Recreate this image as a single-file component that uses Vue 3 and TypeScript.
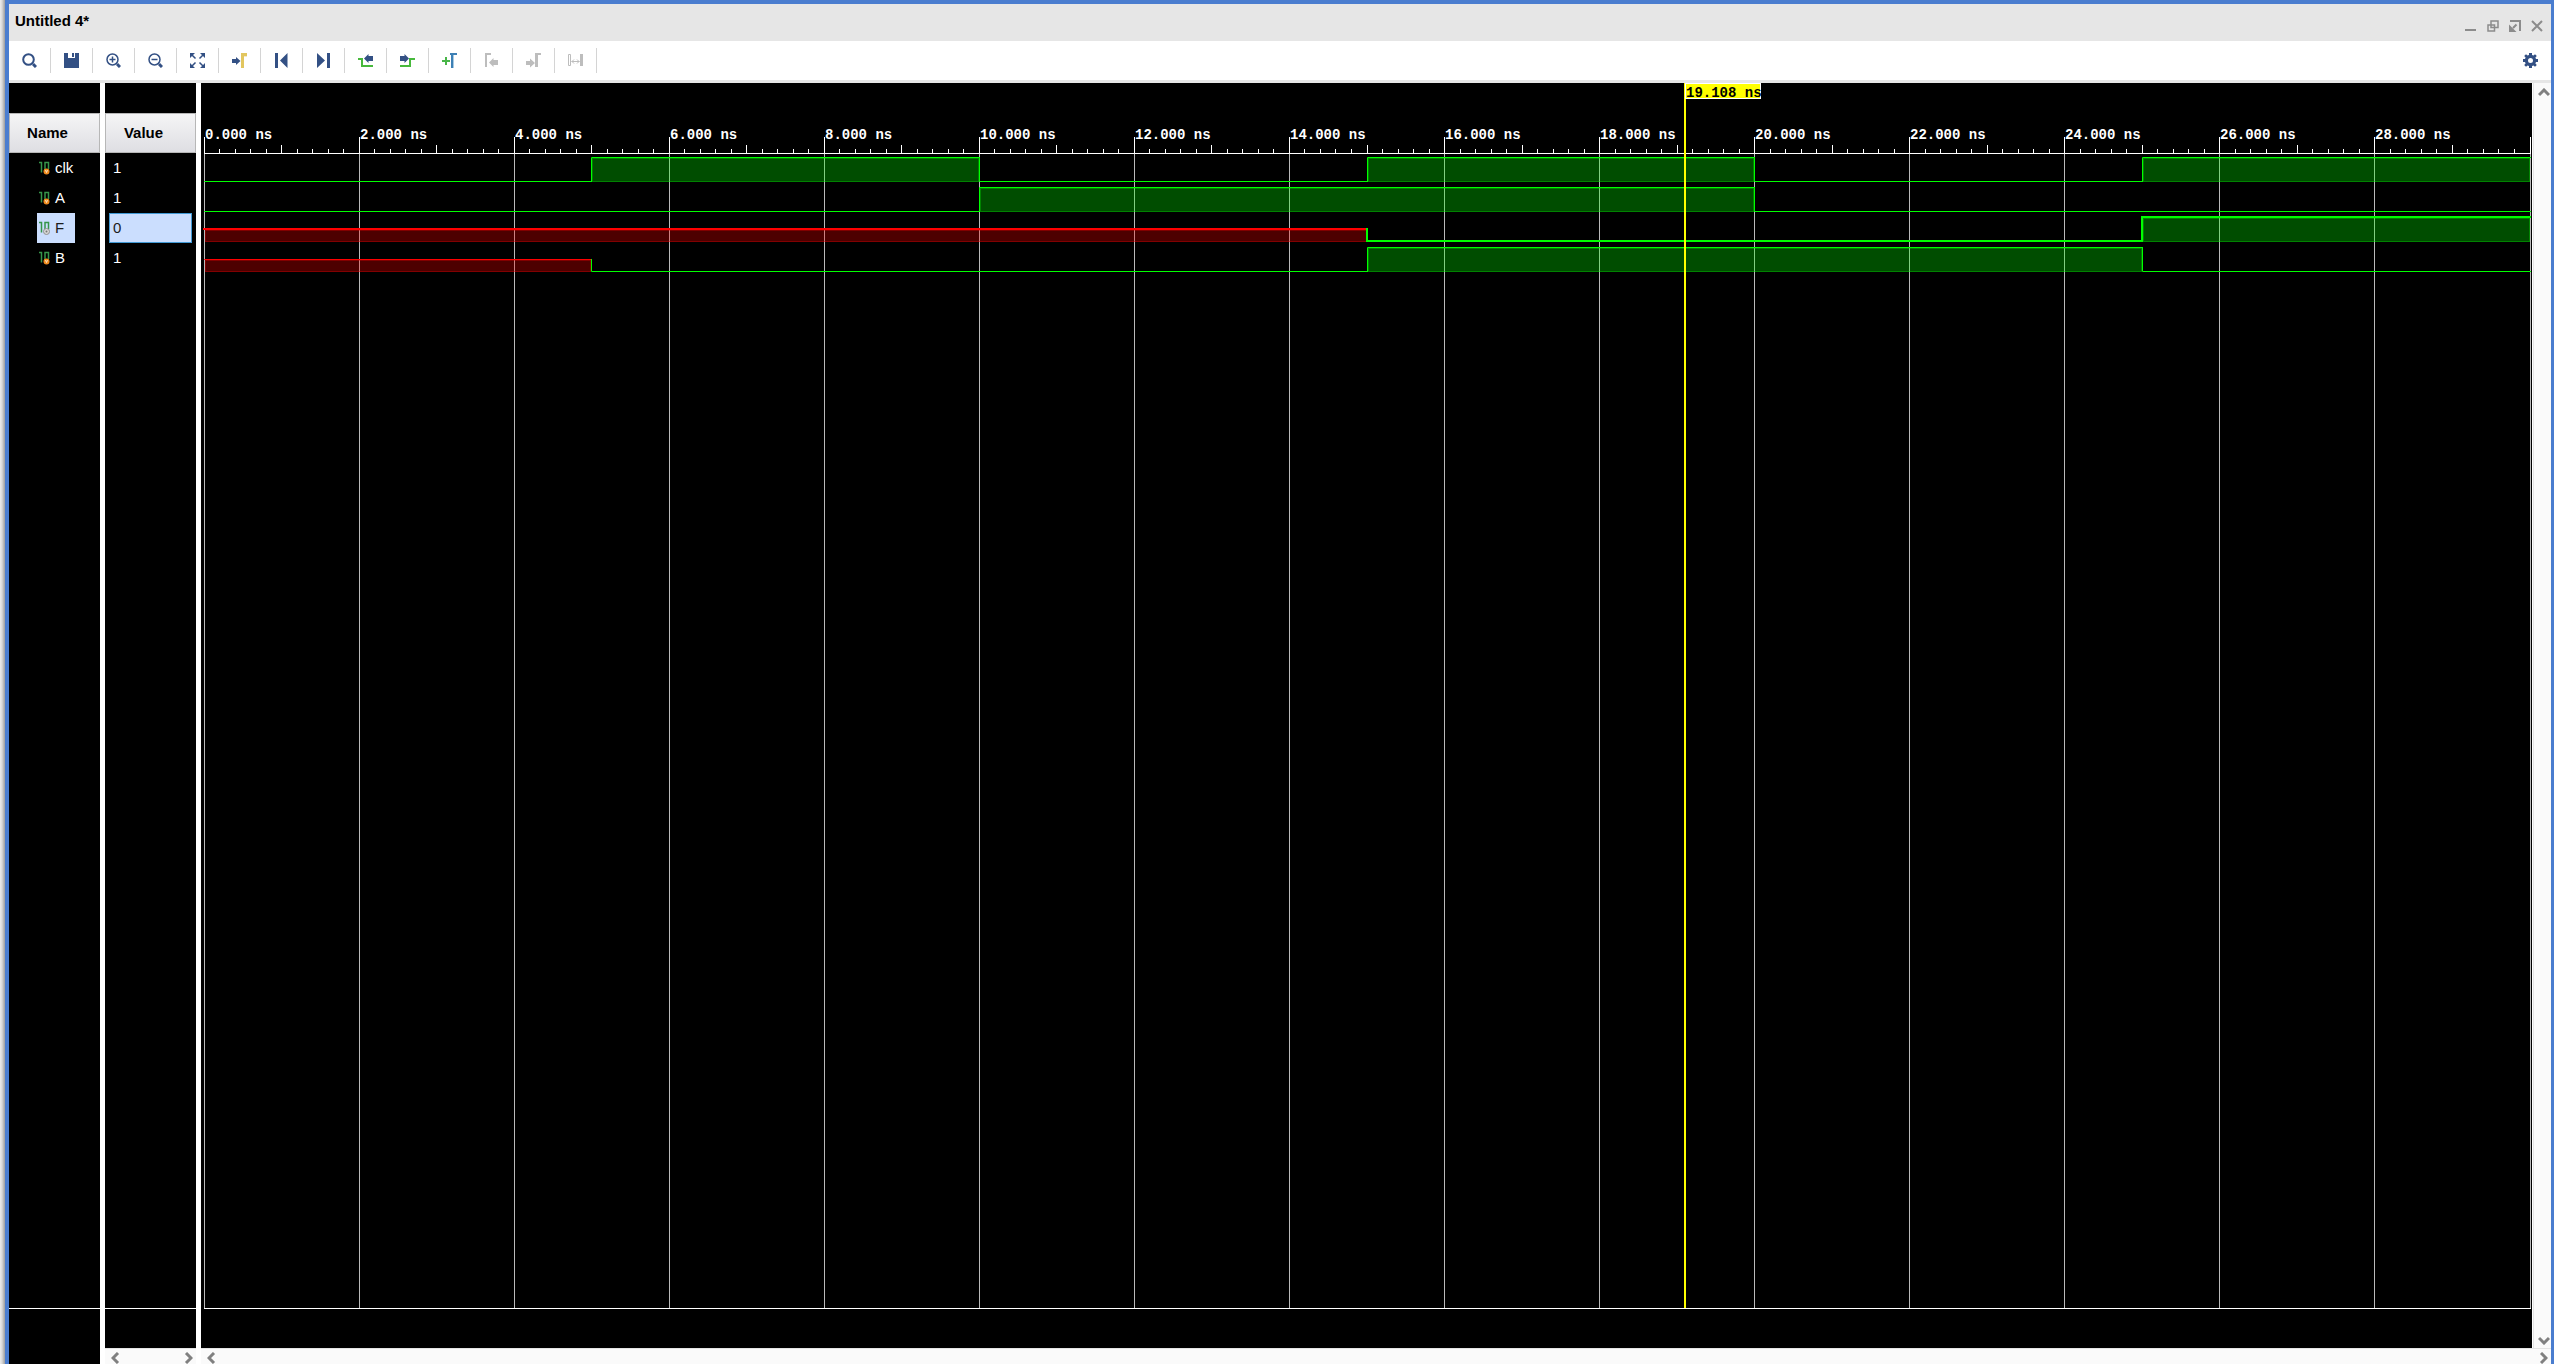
<script setup lang="ts">
import { computed, onBeforeUnmount, onMounted, ref } from 'vue'

type Level = '0' | '1' | 'X'
interface Segment { from: number; to: number; level: Level }
interface Signal { name: string; value: string; output: boolean; segments: Segment[] }

const signals: Signal[] = [
  {
    name: 'clk', value: '1', output: false,
    segments: [
      { from: 0, to: 5, level: '0' }, { from: 5, to: 10, level: '1' },
      { from: 10, to: 15, level: '0' }, { from: 15, to: 20, level: '1' },
      { from: 20, to: 25, level: '0' }, { from: 25, to: 30, level: '1' },
    ],
  },
  {
    name: 'A', value: '1', output: false,
    segments: [
      { from: 0, to: 10, level: '0' }, { from: 10, to: 20, level: '1' }, { from: 20, to: 30, level: '0' },
    ],
  },
  {
    name: 'F', value: '0', output: true,
    segments: [
      { from: 0, to: 15, level: 'X' }, { from: 15, to: 25, level: '0' }, { from: 25, to: 30, level: '1' },
    ],
  },
  {
    name: 'B', value: '1', output: false,
    segments: [
      { from: 0, to: 5, level: 'X' }, { from: 5, to: 15, level: '0' },
      { from: 15, to: 25, level: '1' }, { from: 25, to: 30, level: '0' },
    ],
  },
]

const selected = ref('F')
const cursorTime = 19.108
const endTime = 30
const rulerY = 70
const rowHeight = 30
const levelY: Record<Level, number> = { '0': 28, '1': 4, X: 16 }

const plot = ref<HTMLElement | null>(null)
const width = ref(1200)
const height = ref(600)
let observer: ResizeObserver | undefined

function measure() {
  if (!plot.value) return
  width.value = plot.value.clientWidth
  height.value = plot.value.clientHeight
}
onMounted(() => {
  measure()
  observer = new ResizeObserver(measure)
  if (plot.value) observer.observe(plot.value)
})
onBeforeUnmount(() => observer?.disconnect())

const xAt = (t: number) => 3 + Math.floor((t * (width.value - 5)) / endTime + 0.001)
const floorY = computed(() => height.value - 40)

const ticks = computed(() =>
  Array.from({ length: endTime * 5 + 1 }, (_, i) => ({
    x: xAt(i / 5) + 0.5,
    size: i % 10 === 0 ? 16 : i % 5 === 0 ? 8 : 4,
  })),
)
const majors = computed(() =>
  Array.from({ length: endTime / 2 + 1 }, (_, i) => ({
    x: xAt(i * 2),
    label: i * 2 < endTime ? `${(i * 2).toFixed(3)} ns` : '',
  })),
)
const waves = computed(() =>
  signals.map((s, row) => {
    const active = s.name === selected.value
    const top = rulerY + row * rowHeight
    const half = active ? 0 : 0.5
    return {
      name: s.name,
      active,
      parts: s.segments.map((seg, i) => {
        const x0 = xAt(seg.from)
        const x1 = xAt(seg.to)
        const y = top + levelY[seg.level] + half
        const before = i ? top + levelY[s.segments[i - 1].level] + half : y
        return {
          unknown: seg.level === 'X',
          filled: seg.level !== '0',
          x: x0 + 1.5,
          y: top + levelY[seg.level] + 1.5,
          w: x1 - x0 - 2,
          h: 27 - levelY[seg.level],
          d: `M${x0 + half} ${before}V${y}H${x1 + half}`,
        }
      }),
    }
  }),
)
const cursorX = computed(() => xAt(cursorTime))

const tools = [
  { id: 'search', label: 'Search', disabled: false },
  { id: 'save', label: 'Save', disabled: false },
  { id: 'zoomin', label: 'Zoom in', disabled: false },
  { id: 'zoomout', label: 'Zoom out', disabled: false },
  { id: 'fit', label: 'Zoom fit', disabled: false },
  { id: 'cursor', label: 'Go to cursor', disabled: false },
  { id: 'first', label: 'Go to start', disabled: false },
  { id: 'last', label: 'Go to end', disabled: false },
  { id: 'prev', label: 'Previous transition', disabled: false },
  { id: 'next', label: 'Next transition', disabled: false },
  { id: 'add', label: 'Add marker', disabled: false },
  { id: 'prevmark', label: 'Previous marker', disabled: true },
  { id: 'nextmark', label: 'Next marker', disabled: true },
  { id: 'swap', label: 'Swap cursors', disabled: true },
]
</script>

<template>
  <div class="frame">
    <main class="window">
      <header class="title-bar">
        <h1>Untitled 4*</h1>
        <div class="window-controls">
          <button aria-label="Minimize"><svg width="12" height="12"><path d="M0 10H11" /></svg></button>
          <button aria-label="Restore"><svg width="12" height="12"><path class="fine" d="M4 1H11V7.500H4ZM1 5H7.500V11H1Z" /></svg></button>
          <button aria-label="Float"><svg width="12" height="12"><path d="M1 1H11V11M7.500 4.500L4 8" /><path class="solid" d="M0 4.500V12H7.500Z" /></svg></button>
          <button aria-label="Close"><svg width="12" height="12"><path d="M1 1L11 11M11 1L1 11" /></svg></button>
        </div>
      </header>

      <nav class="toolbar" aria-label="Waveform tools">
        <button v-for="t in tools" :key="t.id" class="tool" :aria-label="t.label" :disabled="t.disabled">
          <svg width="15" height="15" viewBox="0 0 15 15">
            <template v-if="t.id === 'search'">
              <circle class="line" cx="6.5" cy="6.5" r="5.3" />
              <path class="thick" d="M11 11L14 14" />
            </template>
            <template v-else-if="t.id === 'save'">
              <path class="blue" d="M0 0H4V5H11V0H15V15H0Z" />
              <path class="blue" d="M8 0H10V4H8Z" />
            </template>
            <template v-else-if="t.id === 'zoomin' || t.id === 'zoomout'">
              <circle class="line thin" cx="6.5" cy="6.5" r="5.5" />
              <path class="line thin" d="M3.5 6.5H9.5" />
              <path v-if="t.id === 'zoomin'" class="line thin" d="M6.5 3.5V9.5" />
              <path class="thick" d="M11 11L14 14" />
            </template>
            <template v-else-if="t.id === 'fit'">
              <path class="blue" d="M0 0H5L0 5ZM15 0V5L10 0ZM0 15V10L5 15ZM15 15H10L15 10Z" />
              <path class="line thin" d="M2 2L5.5 5.5M13 2L9.5 5.5M2 13L5.5 9.5M13 13L9.5 9.5" />
            </template>
            <template v-else-if="t.id === 'cursor'">
              <path class="blue" d="M0 6H4V4L8.5 8L4 12V10H0Z" />
              <path class="pale-yellow" d="M11 3H15V4H12V15H11Z" />
              <path class="yellow" d="M9 0H15V3H12V15H9Z" />
            </template>
            <path v-else-if="t.id === 'first'" class="blue" d="M1 0H4V15H1ZM13.500 0V15L6 7.5Z" />
            <path v-else-if="t.id === 'last'" class="blue" d="M11 0H14V15H11ZM1 0V15L9 7.5Z" />
            <template v-else-if="t.id === 'prev'">
              <path class="green-line" d="M0 6H4V13H15" />
              <path class="blue" d="M6 5.5L10.500 1V3H15V8H10.500V10Z" />
            </template>
            <template v-else-if="t.id === 'next'">
              <path class="green-line" d="M0 13H10V6H15" />
              <path class="blue" d="M9 5.500L4.500 1V3H0V8H4.500V10Z" />
            </template>
            <template v-else-if="t.id === 'add'">
              <path class="green" d="M3 4H5V7H8V9H5V12H3V9H0V7H3Z" />
              <path class="pale-blue" d="M10 0H12V15H10Z" />
              <path class="sky" d="M8 0H15V2H11V15H9V2H8Z" />
            </template>
            <template v-else-if="t.id === 'prevmark'">
              <path class="grey" d="M1 0H7V2H3V14H1Z" />
              <path class="grey" d="M5 9.500L9.500 5V7H14V12H9.500V14Z" />
            </template>
            <template v-else-if="t.id === 'nextmark'">
              <path class="grey" d="M9 0H15V2H12V14H9Z" />
              <path class="grey" d="M9 10L4 5.500V8H0V12H4V14.500Z" />
            </template>
            <template v-else>
              <path class="grey-line" d="M.5 1.500H2.500V12.500H.5ZM3.500 8.500H11.500M6 6.500L4 8.500L6 10.500M9 6.500L11 8.500L9 10.500" />
              <path class="grey" d="M12 1H15V13H12Z" />
            </template>
          </svg>
        </button>
        <button class="settings" aria-label="Settings">
          <svg width="15" height="15" viewBox="0 0 15 15">
            <path class="blue" fill-rule="evenodd" d="M6 0H9V2L10.500 2.600L12 1.200L13.800 3L12.400 4.500L13 6H15V9H13L12.400 10.500L13.800 12L12 13.800L10.500 12.400L9 13V15H6V13L4.500 12.400L3 13.800L1.200 12L2.600 10.500L2 9H0V6H2L2.600 4.500L1.200 3L3 1.200L4.500 2.600L6 2ZM7.500 5A2.500 2.500 0 1 0 7.500 10A2.500 2.500 0 1 0 7.500 5Z" />
          </svg>
        </button>
      </nav>

      <div class="body">
        <section class="column">
          <table>
            <thead><tr><th>Name</th></tr></thead>
            <tbody>
              <tr v-for="s in signals" :key="s.name" @click="selected = s.name">
                <td class="name-cell">
                  <span class="signal" :class="{ active: s.name === selected }">
                    <svg width="12" height="14" viewBox="0 0 12 14">
                      <path class="bits" d="M0 1.500H2.500V11.500M6 10V1.500H9.500V8" />
                      <circle :class="s.output ? 'badge-out' : 'badge-in'" cx="7.500" cy="10.500" r="3" />
                      <circle v-if="s.output" class="dot" cx="7.500" cy="10.500" r="1" />
                      <path v-else class="mark" d="M6.500 9L7.500 11.500L8.500 9" />
                    </svg>
                    {{ s.name }}
                  </span>
                </td>
              </tr>
            </tbody>
          </table>
          <div class="rest"></div>
          <div class="foot tall"></div>
        </section>

        <section class="column">
          <table>
            <thead><tr><th>Value</th></tr></thead>
            <tbody>
              <tr v-for="s in signals" :key="s.name" @click="selected = s.name">
                <td class="value-cell"><span class="value" :class="{ active: s.name === selected }">{{ s.value }}</span></td>
              </tr>
            </tbody>
          </table>
          <div class="rest"></div>
          <div class="foot"></div>
          <div class="h-scroll">
            <button aria-label="Scroll values left"><svg width="9" height="12"><path d="M7 1L2 6L7 11" /></svg></button>
            <button aria-label="Scroll values right"><svg width="9" height="12"><path d="M2 1L7 6L2 11" /></svg></button>
          </div>
        </section>

        <section class="waves">
          <div class="wave-row">
            <div ref="plot" class="plot">
              <svg class="chart" :width="width" :height="height" role="img" aria-label="Waveforms">
                <line v-for="m in majors" :key="m.x" class="grid" :x1="m.x + 0.5" :x2="m.x + 0.5" :y1="rulerY" :y2="floorY" />
                <line v-for="(t, i) in ticks" :key="i" class="ruler" :x1="t.x" :x2="t.x" :y1="rulerY - t.size" :y2="rulerY" />
                <path class="ruler" :d="`M3 ${rulerY + 0.5}H${width - 1}M3 ${floorY + 0.5}H${width - 1}`" />
                <text v-for="m in majors" :key="'t' + m.x" class="time" :x="m.x + 1" y="56">{{ m.label }}</text>
                <g v-for="w in waves" :key="w.name" :class="{ strong: w.active }">
                  <g v-for="(p, i) in w.parts" :key="i" :class="p.unknown ? 'unknown' : 'known'">
                    <template v-if="p.filled">
                      <rect class="area" :x="p.x - 0.5" :y="p.y - 0.5" :width="p.w + 1" :height="p.h + 1" />
                      <rect class="edge" :x="p.x" :y="p.y" :width="p.w" :height="p.h" />
                    </template>
                    <path class="trace" :d="p.d" />
                  </g>
                </g>
                <line class="cursor" :x1="cursorX" :x2="cursorX" y1="0" :y2="floorY" />
                <rect class="flag" :x="cursorX + 0.5" y="0.5" width="75" height="15" />
                <text class="time dark" :x="cursorX + 1" y="14">{{ cursorTime.toFixed(3) }} ns</text>
              </svg>
            </div>
            <div class="v-scroll">
              <button aria-label="Scroll up"><svg width="12" height="9"><path d="M1 7L6 2L11 7" /></svg></button>
              <button aria-label="Scroll down"><svg width="12" height="9"><path d="M1 2L6 7L11 2" /></svg></button>
            </div>
          </div>
          <div class="h-scroll">
            <button aria-label="Scroll waveform left"><svg width="9" height="12"><path d="M7 1L2 6L7 11" /></svg></button>
            <button aria-label="Scroll waveform right"><svg width="9" height="12"><path d="M2 1L7 6L2 11" /></svg></button>
          </div>
        </section>
      </div>
    </main>
  </div>
</template>

<style>
body { margin: 0; overflow: hidden; }
</style>

<style scoped>
* { box-sizing: border-box; }
.frame {
  height: 100vh;
  padding-left: 5px;
  background: linear-gradient(to right, #ececec, #d8d8d8 2px, #9c9c9c 5px);
  font: 15px/20px "Liberation Sans", Arial, sans-serif;
  color: #000;
}
.window {
  display: flex;
  flex-direction: column;
  height: 100%;
  border: solid #4a7dcf;
  border-width: 4px 3px 0 4px;
  background: #fff;
}
button { margin: 0; padding: 0; border: 0; background: none; display: flex; align-items: center; justify-content: center; }
svg { display: block; flex: none; }

.title-bar {
  flex: none;
  display: flex;
  justify-content: space-between;
  height: 37px;
  padding: 7px 8px 0 6px;
  background: #e6e6e6;
}
h1 { margin: 0; font-size: 15px; line-height: 20px; font-weight: bold; }
.window-controls { display: flex; align-items: center; gap: 10px; }
.window-controls path { fill: none; stroke: #8c8c8c; stroke-width: 2; }
.window-controls .fine { stroke-width: 1.5; }
.window-controls .solid { fill: #8c8c8c; stroke: none; }

.toolbar { flex: none; display: flex; align-items: center; height: 42px; border-bottom: 3px solid #e6e6e6; }
.tool { width: 42px; height: 25px; border-right: 1px solid #d4d4d4; }
.settings { margin-left: auto; margin-right: 13px; }
.blue { fill: #335084; }
.line, .thick { fill: none; stroke: #335084; stroke-width: 2; }
.line.thin { stroke-width: 1.5; }
.thick { stroke-width: 3; }
.yellow { fill: #e2c65f; }
.pale-yellow { fill: #f5ebc8; }
.green { fill: #48b548; }
.green-line { fill: none; stroke: #48b93c; stroke-width: 2; }
.sky { fill: #3d80b5; }
.pale-blue { fill: #a9cbe2; }
.grey { fill: #bdbdbd; }
.grey-line { fill: none; stroke: #bdbdbd; }

.body { flex: 1; min-height: 0; display: flex; gap: 5px; }
.column { flex: none; display: flex; flex-direction: column; width: 91px; padding-top: 30px; background: #000; }
table { width: 100%; border-collapse: separate; border-spacing: 0; }
th {
  height: 40px;
  padding: 0 14px 0 0;
  border: 1px solid #b7b7b7;
  background: linear-gradient(#f5f5f6, #dedee3);
  font-weight: bold;
  text-align: center;
}
td { height: 30px; padding: 0; color: #fff; }
.signal { display: flex; align-items: center; gap: 4px; width: max-content; height: 30px; margin-left: 28px; padding: 0 11px 0 2px; }
.value-cell { padding: 0 4px; }
.value { display: flex; align-items: center; height: 30px; padding-left: 3px; border: 1px solid transparent; }
.active { background: #cbdefe; color: #1c1c1c; }
.value.active { border-color: #429ad5; }
.bits { fill: none; stroke: #35954a; stroke-width: 1.5; }
.badge-in { fill: #f28c1e; }
.badge-out { fill: #d8d8d8; stroke: #909090; }
.dot { fill: #777; }
.mark { fill: none; stroke: #fbe3c4; }
.rest { flex: 1; border-bottom: 1px solid #fff; }
.foot { flex: none; height: 39px; }
.foot.tall { height: 55px; }

.waves { flex: 1; min-width: 0; display: flex; flex-direction: column; }
.wave-row { flex: 1; min-height: 0; display: flex; gap: 1px; }
.plot { flex: 1; min-width: 0; overflow: hidden; background: #000; }
.v-scroll {
  flex: none;
  display: flex;
  flex-direction: column;
  justify-content: space-between;
  width: 18px;
  padding: 5px 0 3px 3px;
  border-left: 1px solid #e4e4e4;
  background: #fafafa;
}
.h-scroll {
  flex: none;
  display: flex;
  justify-content: space-between;
  height: 16px;
  padding: 3px 3px 0 6px;
  border-top: 1px solid #e4e4e4;
  background: #fafafa;
}
.h-scroll path, .v-scroll path { fill: none; stroke: #808080; stroke-width: 3; }

.grid { stroke: #bababa; }
.ruler { stroke: #fff; fill: none; }
.time { fill: #fff; font: bold 14px "Liberation Mono", "Courier New", monospace; white-space: pre; }
.time.dark { fill: #000; }
.known { --c: #00ff00; }
.unknown { --c: #ff0000; }
.area { fill: var(--c); fill-opacity: 0.3; }
.edge { fill: none; stroke: var(--c); stroke-opacity: 0.3; }
.trace { fill: none; stroke: var(--c); stroke-width: 1; stroke-linecap: square; }
.strong .trace { stroke-width: 2; }
.cursor { stroke: #ffff00; stroke-width: 2; }
.flag { fill: #ffff00; stroke: #fff; }
</style>
